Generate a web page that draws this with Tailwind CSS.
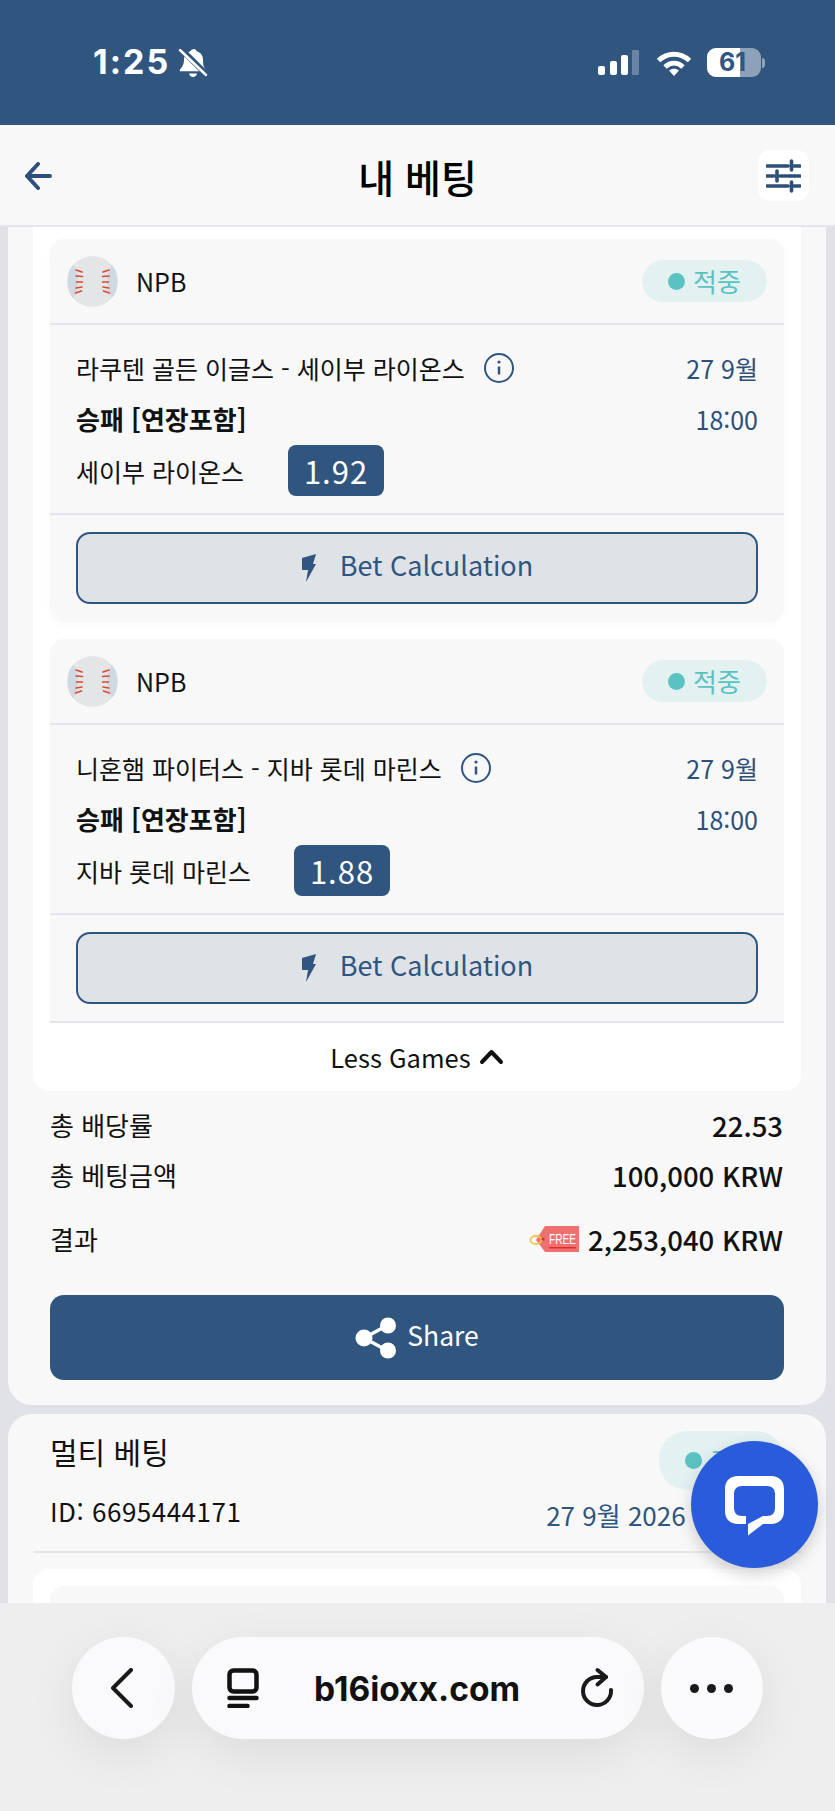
<!DOCTYPE html>
<html lang="ko">
<head>
<meta charset="UTF-8">
<meta name="viewport" content="width=device-width, initial-scale=1.0">
<title>내 베팅</title>
<script src="https://cdn.jsdelivr.net/npm/@tailwindcss/browser@4"></script>
</head>
<body class="bg-[#e0e2e7]">
<div class="relative flex flex-col w-[835px] h-[1811px] overflow-hidden font-['Noto_Sans_CJK_KR','Noto_Sans',sans-serif] text-[#111]">

  <!-- status bar -->
  <div class="h-[125px] shrink-0 bg-[#30557f] flex items-center justify-between pl-[93px] pr-[70px] text-white">
    <div class="flex items-center gap-[8px]">
      <span class="font-['Inter',sans-serif] font-bold text-[34px] leading-none tracking-[2px] pb-[1px]">1:25</span>
      <svg class="w-[30px] h-[31px]" viewBox="0 0 30 31" fill="white"><path d="M16 2c1.500 0 2.500 1 2.600 2.300 4 1 6.400 4.400 6.400 8.400 0 5 .6 7.400 2.600 9.700.6.800.2 1.800-.8 1.800H2.800c-1 0-1.400-1-.8-1.800 2-2.300 4-4.700 4-9.700 0-4 2.400-7.400 6.400-8.400C12.500 3 14.500 2 16 2z"/><path d="M11 26.500h8c-.3 2-2 3.500-4 3.500s-3.700-1.500-4-3.500z"/><path d="M4 3 28 27" stroke="#30557f" stroke-width="6"/><path d="M2 3 28 28" stroke="white" stroke-width="2.500" stroke-linecap="round"/></svg>
    </div>
    <div class="flex items-center">
      <svg class="w-[41px] h-[25px]" viewBox="0 0 41 25"><rect x="0" y="16" width="7" height="9" rx="2" fill="white"/><rect x="12" y="11" width="7" height="14" rx="2" fill="white"/><rect x="23" y="5" width="7" height="20" rx="2" fill="white"/><rect x="34" y="0" width="7" height="25" rx="1" fill="white" fill-opacity=".28"/></svg>
      <svg class="ml-[17px] w-[36px] h-[26px]" viewBox="0 0 36 26" fill="none" stroke="white" stroke-width="5"><path d="M2.500 10.500c9-8.500 22-8.500 31 0"/><path d="M9 17c5.500-5 12.500-5 18 0"/><path d="M18 26 13 20.500c3-2.500 7-2.500 10 0z" fill="white" stroke="none"/></svg>
      <div class="relative ml-[15px] flex items-center w-[58px] h-[29px]">
        <div class="w-[54px] h-[29px] rounded-[9px] bg-white/45 overflow-hidden"><div class="w-[33px] h-full bg-white"></div></div>
        <div class="w-[3px] h-[10px] ml-[1px] rounded-r-full bg-white/45"></div>
        <span class="absolute left-[12px] top-0 font-['Inter',sans-serif] font-bold text-[25px] leading-[29px] text-[#30557f]">61</span>
      </div>
    </div>
  </div>

  <!-- header -->
  <div class="h-[102px] shrink-0 bg-[#f8f8f8] border-b-[2px] border-[#e3e7ec] flex items-center justify-between pl-[24px] pr-[26px] pt-[1px] relative">
    <svg class="w-[28px] h-[28px]" viewBox="0 0 28 28" fill="none" stroke="#2d4f78" stroke-width="4" stroke-linecap="round" stroke-linejoin="round"><path d="M14 2 3 14l11 12M3 14h23"/></svg>
    <h1 class="absolute left-0 right-0 text-center text-[39px] leading-[50px] font-medium text-black">내 베팅</h1>
    <div class="w-[51px] h-[51px] rounded-[12px] bg-white flex items-center justify-center">
      <svg class="w-[35px] h-[34px]" viewBox="0 0 35 34" fill="none" stroke="#2d4f78" stroke-width="3.600" stroke-linecap="round"><path d="M1 7h21M28 7h6M25.500 2v9M1 17h7M14 17h20M11 12v10M1 27h21M28 27h6M25.500 23v9"/></svg>
    </div>
  </div>

  <!-- scrolling content -->
  <div class="flex-1 min-h-0 overflow-hidden">
    <div class="ml-[8px] mr-[9px] bg-[#f8f8f8] rounded-b-[24px] pb-[25px]">
      <div class="mx-[25px] bg-white rounded-b-[16px] px-[17px] pt-[12px]">

        <div class="bg-[#f8f8f8] rounded-[14px] mb-[17px] shadow-[0_2px_12px_rgba(0,0,0,0.02)]">
          <div class="h-[86px] flex items-center justify-between px-[17px] border-b-[2px] border-[#e3e7ec]">
            <div class="flex items-center gap-[18px]">
              <svg class="w-[51px] h-[51px]" viewBox="0 0 51 51"><circle cx="25.500" cy="25.500" r="25.500" fill="#e4e5e7"/><path d="M6 9C-1 16-1 35 6 42c3-4 5-10 5-16.500S9 13 6 9zM45 9c7 7 7 26 0 33-3-4-5-10-5-16.500S42 13 45 9z" fill="#cfd9e1"/><g stroke="#d9492f" stroke-width="1.600" stroke-linecap="round"><path d="M9 14l6 2M9 20l6.500.5M9.500 26h6M9 32l6-1M8.500 37l6-2M42 14l-6 2M42 20l-6.500.5M41.500 26h-6M42 32l-6-1M42.500 37l-6-2"/></g></svg>
              <span class="text-[25px] leading-none">NPB</span>
            </div>
            <div class="w-[125px] h-[42px] rounded-full bg-[#e3f2f1] flex items-center justify-center gap-[8px]">
              <span class="w-[17px] h-[17px] rounded-full bg-[#5bc2c2]"></span>
              <span class="text-[26px] leading-none text-[#5bc2c2]">적중</span>
            </div>
          </div>
          <div class="flex justify-between pl-[26px] pr-[26px] pt-[25px] pb-[17px] border-b-[2px] border-[#e3e7ec]">
            <div>
              <div class="flex items-center h-[36px]">
                <span class="text-[25px] leading-[36px]">라쿠텐 골든 이글스 - 세이부 라이온스</span>
                <svg class="ml-[19px] w-[30px] h-[30px]" viewBox="0 0 30 30" fill="none" stroke="#30557f" stroke-width="2"><circle cx="15" cy="15" r="14"/><path d="M15 13.500v8" stroke-width="2.500"/><circle cx="15" cy="9" r="1.600" fill="#30557f" stroke="none"/></svg>
              </div>
              <div class="h-[36px] mt-[15px] text-[26px] leading-[36px] font-bold">승패 [연장포함]</div>
              <div class="flex items-center mt-[8px]">
                <span class="text-[25px] leading-[36px]">세이부 라이온스</span>
                <span class="ml-[44px] w-[96px] h-[51px] rounded-[8px] bg-[#30557f] text-white text-[31px] leading-[51px] text-center tracking-[1px]">1.92</span>
              </div>
            </div>
            <div class="text-right text-[25px] leading-[36px] text-[#2d4f78]">
              <div>27 9월</div>
              <div class="mt-[15px]">18:00</div>
            </div>
          </div>
          <div class="px-[26px] pt-[17px] pb-[18px]">
            <div class="h-[72px] rounded-[14px] border-[2px] border-[#30557f] bg-[#dfe3e8] flex items-center justify-center gap-[24px] text-[#30557f]">
              <svg class="w-[15px] h-[28px]" viewBox="0 0 15 28" fill="#30557f"><path d="M1 4 15 0l-3 10h3L5 28l2-12H1z"/></svg>
              <span class="text-[27px] leading-none pb-[8px]">Bet Calculation</span>
            </div>
          </div>
        </div>

        <div class="bg-[#f8f8f8] rounded-t-[14px] border-b-[2px] border-[#e3e7ec]">
          <div class="h-[86px] flex items-center justify-between px-[17px] border-b-[2px] border-[#e3e7ec]">
            <div class="flex items-center gap-[18px]">
              <svg class="w-[51px] h-[51px]" viewBox="0 0 51 51"><circle cx="25.500" cy="25.500" r="25.500" fill="#e4e5e7"/><path d="M6 9C-1 16-1 35 6 42c3-4 5-10 5-16.500S9 13 6 9zM45 9c7 7 7 26 0 33-3-4-5-10-5-16.500S42 13 45 9z" fill="#cfd9e1"/><g stroke="#d9492f" stroke-width="1.600" stroke-linecap="round"><path d="M9 14l6 2M9 20l6.500.5M9.500 26h6M9 32l6-1M8.500 37l6-2M42 14l-6 2M42 20l-6.500.5M41.500 26h-6M42 32l-6-1M42.500 37l-6-2"/></g></svg>
              <span class="text-[25px] leading-none">NPB</span>
            </div>
            <div class="w-[125px] h-[42px] rounded-full bg-[#e3f2f1] flex items-center justify-center gap-[8px]">
              <span class="w-[17px] h-[17px] rounded-full bg-[#5bc2c2]"></span>
              <span class="text-[26px] leading-none text-[#5bc2c2]">적중</span>
            </div>
          </div>
          <div class="flex justify-between pl-[26px] pr-[26px] pt-[25px] pb-[17px] border-b-[2px] border-[#e3e7ec]">
            <div>
              <div class="flex items-center h-[36px]">
                <span class="text-[25px] leading-[36px]">니혼햄 파이터스 - 지바 롯데 마린스</span>
                <svg class="ml-[19px] w-[30px] h-[30px]" viewBox="0 0 30 30" fill="none" stroke="#30557f" stroke-width="2"><circle cx="15" cy="15" r="14"/><path d="M15 13.500v8" stroke-width="2.500"/><circle cx="15" cy="9" r="1.600" fill="#30557f" stroke="none"/></svg>
              </div>
              <div class="h-[36px] mt-[15px] text-[26px] leading-[36px] font-bold">승패 [연장포함]</div>
              <div class="flex items-center mt-[8px]">
                <span class="text-[25px] leading-[36px]">지바 롯데 마린스</span>
                <span class="ml-[43px] w-[96px] h-[51px] rounded-[8px] bg-[#30557f] text-white text-[31px] leading-[51px] text-center tracking-[1px]">1.88</span>
              </div>
            </div>
            <div class="text-right text-[25px] leading-[36px] text-[#2d4f78]">
              <div>27 9월</div>
              <div class="mt-[15px]">18:00</div>
            </div>
          </div>
          <div class="px-[26px] pt-[17px] pb-[17px]">
            <div class="h-[72px] rounded-[14px] border-[2px] border-[#30557f] bg-[#dfe3e8] flex items-center justify-center gap-[24px] text-[#30557f]">
              <svg class="w-[15px] h-[28px]" viewBox="0 0 15 28" fill="#30557f"><path d="M1 4 15 0l-3 10h3L5 28l2-12H1z"/></svg>
              <span class="text-[27px] leading-none pb-[8px]">Bet Calculation</span>
            </div>
          </div>
        </div>

        <div class="h-[68px] flex items-center justify-center gap-[8px] pb-[1px]">
          <span class="text-[25.500px] leading-none">Less Games</span>
          <svg class="w-[25px] h-[16px]" viewBox="0 0 25 16" fill="none" stroke="#111" stroke-width="4" stroke-linecap="round" stroke-linejoin="round"><path d="M3 13 12.500 3 22 13"/></svg>
        </div>
      </div>

      <div class="pl-[42px] pr-[43px] pt-[16px] text-[26px] leading-[36px]">
        <div class="flex items-center justify-between h-[36px]">
          <span>총 배당률</span><span class="font-medium text-[27.500px]">22.53</span>
        </div>
        <div class="flex items-center justify-between h-[36px] mt-[14px]">
          <span>총 베팅금액</span><span class="font-medium text-[27.500px]">100,000 KRW</span>
        </div>
        <div class="flex items-center justify-between h-[36px] mt-[28px]">
          <span>결과</span>
          <div class="flex items-center gap-[9px]">
            <svg class="w-[49px] h-[26px] overflow-visible" viewBox="0 0 49 26"><path d="M15 0h34v26H15L6 14z" fill="#f07070"/><ellipse cx="6" cy="14" rx="5.500" ry="4" fill="none" stroke="#f2c14e" stroke-width="1.800"/><circle cx="13" cy="13" r="1.600" fill="#d9302a"/><text x="19" y="18" font-family="Liberation Sans" font-size="15" fill="white" textLength="27" lengthAdjust="spacingAndGlyphs">FREE</text><rect x="19" y="21" width="27" height="1.500" fill="#d9302a"/></svg>
            <span class="font-medium text-[27.500px]">2,253,040 KRW</span>
          </div>
        </div>
        <div class="h-[85px] mt-[38px] mr-[-1px] rounded-[14px] bg-[#30557f] flex items-center justify-center gap-[10px] text-white">
          <svg class="w-[42px] h-[42px]" viewBox="0 0 42 42" fill="white" stroke="white"><path d="M9 21 33 8M9 21l24 13" stroke-width="3.500" fill="none"/><circle cx="9" cy="21" r="8.500" stroke="none"/><circle cx="33" cy="8.500" r="8" stroke="none"/><circle cx="33" cy="33.500" r="8" stroke="none"/></svg>
          <span class="text-[26.500px] leading-none pb-[5px]">Share</span>
        </div>
      </div>
    </div>

    <div class="mt-[9px] ml-[8px] mr-[9px] bg-[#f8f8f8] rounded-t-[24px] pt-[16px]">
      <div class="flex justify-between pl-[42px] pr-[42px]">
        <div>
          <div class="text-[30px] leading-[42px]">멀티 베팅</div>
          <div class="mt-[21px] text-[26px] leading-[36px] tracking-[0.5px]">ID: 6695444171</div>
        </div>
        <div class="flex flex-col items-end pt-[1px]">
          <div class="w-[125px] h-[59px] rounded-[28px] bg-[#e3f2f1] flex items-center pl-[26px] gap-[9px]">
            <span class="w-[17px] h-[17px] rounded-full bg-[#5bc2c2]"></span>
            <span class="text-[25px] leading-none text-[#5bc2c2]">적중</span>
          </div>
          <div class="mt-[7px] mr-[-10px] text-[26px] leading-[36px] text-[#30557f] whitespace-nowrap">27 9월 2026 18:00:00</div>
        </div>
      </div>
      <div class="mx-[25px] mt-[18px] border-b-[2px] border-[#e3e7ec]"></div>
      <div class="mx-[25px] mt-[16px] bg-white rounded-t-[16px] px-[17px] pt-[17px]">
        <div class="bg-[#f8f8f8] rounded-t-[14px] h-[80px]"></div>
      </div>
    </div>
  </div>

  <!-- chat button -->
  <div class="absolute left-[691px] top-[1441px] w-[127px] h-[127px] rounded-full bg-[#2a5bdb] shadow-[0_6px_16px_rgba(0,0,0,0.18)] flex items-center justify-center">
    <svg class="w-[60px] h-[60px] mt-[2px]" viewBox="0 0 60 60"><path d="M13 0h33c8 0 13 5 13 13v22c0 8-5 13-13 13h-8L23 59.500V48H13C5 48 0 43 0 35V13C0 5 5 0 13 0z" fill="white"/><path d="M17 10h25c5 0 8 3 8 8v14c0 5-3 8-8 8h-4L23 48v-8h-6c-5 0-8-3-8-8V18c0-5 3-8 8-8z" fill="#2a5bdb"/><rect x="21" y="40" width="2" height="9" fill="#2a5bdb"/></svg>
  </div>

  <!-- browser bar -->
  <div class="h-[208px] shrink-0 bg-[#eeeeef] flex justify-center gap-[17px] pt-[34px] pr-[1px]">
    <div class="w-[103px] h-[102px] rounded-full bg-[#fafafc] shadow-[0_14px_50px_rgba(0,0,0,0.08)] flex items-center justify-center pr-[2px]">
      <svg class="w-[24px] h-[40px]" viewBox="0 0 24 40" fill="none" stroke="#1a1a1a" stroke-width="4" stroke-linecap="round" stroke-linejoin="round"><path d="M21 2 3 20l18 18"/></svg>
    </div>
    <div class="w-[452px] h-[102px] rounded-full bg-[#fafafc] shadow-[0_14px_50px_rgba(0,0,0,0.08)] flex items-center justify-between pl-[35px] pr-[29px]">
      <svg class="w-[32px] h-[40px]" viewBox="0 0 32 40" fill="none" stroke="#111" stroke-width="4.500" stroke-linecap="round"><rect x="2.500" y="2.500" width="27" height="21" rx="4"/><path d="M2.500 30h27M2.500 38h18"/></svg>
      <span class="font-['Inter',sans-serif] font-bold text-[33.500px] leading-none text-[#111] mr-[3px] mt-[3px]">b16ioxx.com</span>
      <svg class="w-[36px] h-[42px]" viewBox="0 0 36 42" fill="none" stroke="#1a1a1a" stroke-width="4" stroke-linecap="round" stroke-linejoin="round"><path d="M27 10H18A14 14 0 1 0 32 23"/><path d="M18.500 3 27 10 18.500 17.500"/></svg>
    </div>
    <div class="w-[102px] h-[102px] rounded-full bg-[#fafafc] shadow-[0_14px_50px_rgba(0,0,0,0.08)] flex items-center justify-center gap-[8px]">
      <span class="w-[9px] h-[9px] rounded-full bg-[#1a1a1a]"></span>
      <span class="w-[9px] h-[9px] rounded-full bg-[#1a1a1a]"></span>
      <span class="w-[9px] h-[9px] rounded-full bg-[#1a1a1a]"></span>
    </div>
  </div>
</div>
</body>
</html>
